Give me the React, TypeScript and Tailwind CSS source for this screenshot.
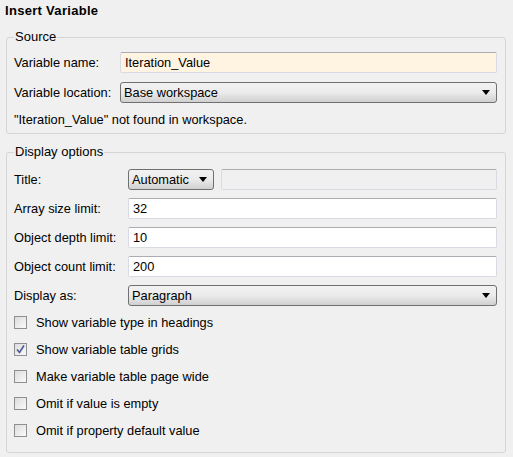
import React from "react";

const inputBase =
  "h-[21px] flex items-center px-[4px] border border-[#d9dbe2] border-t-[#abadb3] rounded-[2px]";

function Select({ value, className }: { value: string; className: string }) {
  return (
    <div
      className={`h-[21px] flex items-center justify-between pl-[3px] pr-[6px] border border-[#707070] rounded-[3px] bg-gradient-to-b from-[#f2f2f2] via-[#ebebeb] to-[#d0d0d0] ${className}`}
    >
      <span>{value}</span>
      <svg width="8" height="5" viewBox="0 0 8 5">
        <path d="M0 0 L8 0 L4 5 Z" fill="#000" />
      </svg>
    </div>
  );
}

function Row({ label, width, children }: { label: string; width: string; children: React.ReactNode }) {
  return (
    <div className="flex items-center">
      <div className={`${width} shrink-0`}>{label}</div>
      {children}
    </div>
  );
}

function Check({ label, checked }: { label: string; checked?: boolean }) {
  return (
    <div className="h-[27px] flex items-center">
      <div className="w-[13px] h-[13px] border border-[#8e8f8f] bg-gradient-to-br from-[#dcdcdc] to-[#fafafa] flex items-center justify-center">
        {checked && (
          <svg width="9" height="9" viewBox="0 0 9 9">
            <path d="M1 4.5 L3.5 7.5 L8 0.5" fill="none" stroke="#4a5a92" strokeWidth="1.6" />
          </svg>
        )}
      </div>
      <span className="ml-[9px]">{label}</span>
    </div>
  );
}

export default function App() {
  return (
    <div className="w-[513px] h-[457px] bg-[#f0f0f0] text-[12.8px] text-black font-['Liberation_Sans',Arial,sans-serif] leading-[14px]">
      <div className="pl-[5px] pt-[4px] h-[30px] text-[13px] font-bold tracking-[0.3px]">Insert Variable</div>

      <fieldset className="ml-[6px] mr-[7px] border border-[#d5d5d5] rounded-[3px] px-[7px] pb-[6px]">
        <legend className="px-[1px] text-[13px]">Source</legend>
        <div className="flex flex-col gap-[9px] pt-[8px]">
          <Row label="Variable name:" width="w-[106px]">
            <div className={`${inputBase} bg-[#fff3e1] w-[377px]`}>Iteration_Value</div>
          </Row>
          <Row label="Variable location:" width="w-[106px]">
            <Select value="Base workspace" className="w-[377px]" />
          </Row>
          <div className="mt-[1px]">"Iteration_Value" not found in workspace.</div>
        </div>
      </fieldset>

      <fieldset className="ml-[6px] mr-[7px] mt-[11px] border border-[#d5d5d5] rounded-[3px] px-[7px] pb-[8px]">
        <legend className="px-[1px] text-[13px]">Display options</legend>
        <div className="flex flex-col gap-[8px] pt-[10px]">
          <Row label="Title:" width="w-[114px]">
            <Select value="Automatic" className="w-[86px]" />
            <div className={`${inputBase} ml-[7px] w-[276px] bg-[#f0f0f0] border-[#adadad]`} />
          </Row>
          <Row label="Array size limit:" width="w-[114px]">
            <div className={`${inputBase} bg-white w-[369px]`}>32</div>
          </Row>
          <Row label="Object depth limit:" width="w-[114px]">
            <div className={`${inputBase} bg-white w-[369px]`}>10</div>
          </Row>
          <Row label="Object count limit:" width="w-[114px]">
            <div className={`${inputBase} bg-white w-[369px]`}>200</div>
          </Row>
          <Row label="Display as:" width="w-[114px]">
            <Select value="Paragraph" className="w-[369px]" />
          </Row>
        </div>
        <div className="flex flex-col mt-[3px]">
          <Check label="Show variable type in headings" />
          <Check label="Show variable table grids" checked />
          <Check label="Make variable table page wide" />
          <Check label="Omit if value is empty" />
          <Check label="Omit if property default value" />
        </div>
      </fieldset>
    </div>
  );
}
